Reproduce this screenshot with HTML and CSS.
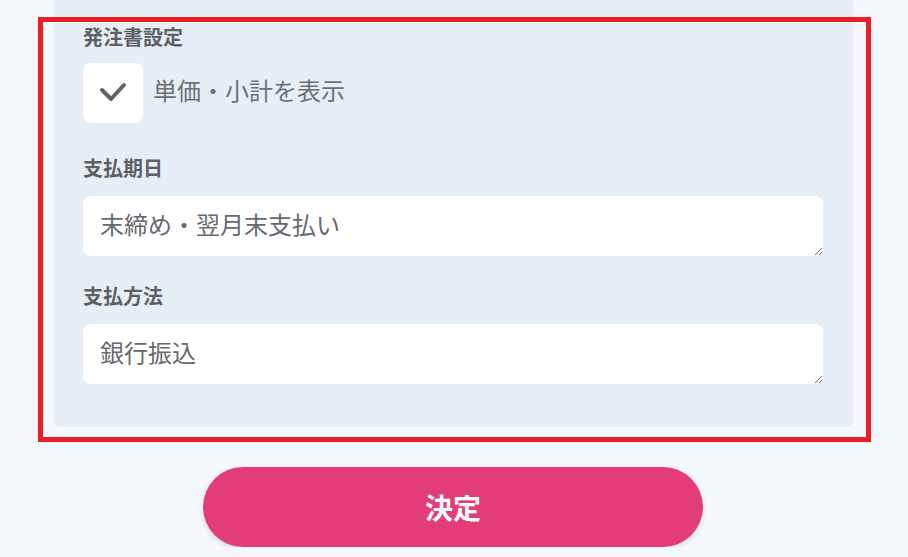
FILE: index.html
```html
<!DOCTYPE html>
<html lang="ja">
<head>
<meta charset="utf-8">
<link rel="stylesheet" href="styles.css">
</head>
<body>
<div class="page">
  <section class="panel">
    <div class="field field-check">
      <div class="label">発注書設定</div>
      <label class="check">
        <span class="box">
          <svg width="60" height="60" viewBox="0 0 60 60"><path d="M19 27 L28 36 L41 22" fill="none" stroke="#5f6267" stroke-width="4" stroke-linecap="round" stroke-linejoin="round"/></svg>
        </span>
        <span class="check-text">単価・小計を表示</span>
      </label>
    </div>
    <div class="field">
      <div class="label">支払期日</div>
      <textarea class="input">末締め・翌月末支払い</textarea>
    </div>
    <div class="field">
      <div class="label">支払方法</div>
      <textarea class="input">銀行振込</textarea>
    </div>
  </section>
  <button class="submit">決定</button>
</div>
<div class="highlight"></div>
</body>
</html>
```
FILE: styles.css
```css
html, body {
  margin: 0;
  padding: 0;
  background: #f5f9fd;
  font-family: "Noto Sans CJK JP", "Noto Sans", sans-serif;
}
.page {
  width: 800px;
  margin-left: 53px;
}
.panel {
  background: #e6eef6;
  border-radius: 0 0 8px 8px;
  padding: 27px 30px 43px;
  display: flex;
  flex-direction: column;
}
.field {
  display: flex;
  flex-direction: column;
}
.field + .field {
  margin-top: 30px;
}
.field-check + .field {
  margin-top: 35px;
}
.label {
  font-size: 20px;
  line-height: 20px;
  font-weight: 700;
  color: #5c6066;
  margin-bottom: 18px;
}
.field-check .label {
  margin-bottom: 16px;
}
.check {
  display: flex;
  align-items: center;
  gap: 10px;
}
.box {
  width: 60px;
  height: 60px;
  background: #ffffff;
  border-radius: 8px;
  display: block;
}
.box svg {
  display: block;
}
.check-text {
  font-size: 24px;
  line-height: 24px;
  color: #6d7177;
  padding-bottom: 6px;
}
.input {
  display: block;
  box-sizing: border-box;
  width: 740px;
  height: 60px;
  border: none;
  border-radius: 8px;
  background: #ffffff;
  padding: 16px 17px;
  font-family: "Noto Sans CJK JP", "Noto Sans", sans-serif;
  font-size: 24px;
  line-height: 24px;
  color: #65696f;
  resize: vertical;
  outline: none;
}
.submit {
  display: block;
  width: 500px;
  height: 80px;
  margin: 40px auto 0;
  border: none;
  border-radius: 40px;
  background: #e23d78;
  color: #ffffff;
  font-family: "Noto Sans CJK JP", "Noto Sans", sans-serif;
  font-size: 28px;
  font-weight: 700;
  box-shadow: 0 2px 6px rgba(0, 0, 0, 0.12);
}
.highlight {
  position: absolute;
  left: 38px;
  top: 17px;
  width: 823px;
  height: 415px;
  border: 5px solid #ee1c25;
  pointer-events: none;
}
```
